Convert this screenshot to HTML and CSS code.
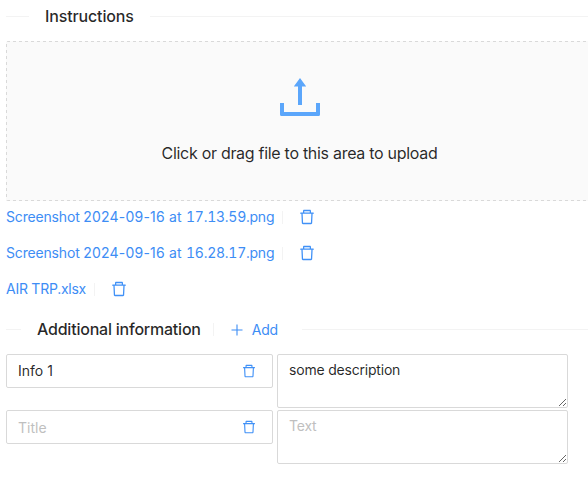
FILE: index.html
```html
<!DOCTYPE html>
<html lang="en">
<head>
<meta charset="utf-8">
<title>Instructions</title>
<link rel="stylesheet" href="styles.css">
</head>
<body>
<svg class="sprite" aria-hidden="true">
  <symbol id="trash" viewBox="64 64 896 896"><path d="M360 184h-8c4.400 0 8-3.600 8-8v8h304v-8c0 4.400 3.600 8 8 8h-8v72h72v-80c0-35.300-28.700-64-64-64H352c-35.300 0-64 28.700-64 64v80h72v-72zm504 72H160c-17.700 0-32 14.300-32 32v32c0 4.400 3.600 8 8 8h60.400l24.700 523c1.600 34.100 29.800 61 63.900 61h454c34.200 0 62.300-26.800 63.900-61l24.700-523H888c4.400 0 8-3.600 8-8v-32c0-17.700-14.300-32-32-32zM731.300 840H292.700l-24.200-512h487l-24.200 512z"/></symbol>
</svg>
<main class="form">
  <div class="divider instructions"><h2>Instructions</h2></div>
  <section class="dropzone">
    <svg class="upload" viewBox="0 0 40 38"><path d="M20 0 26.200 8.500H22V27H18V8.500H13.800ZM0 25H4V34H36V25H40V36.500Q40 38 38.500 38H1.500Q0 38 0 36.500Z"/></svg>
    <p>Click or drag file to this area to upload</p>
  </section>
  <ul class="files">
    <li><a><span class="name">Screenshot </span><span class="date">2024-09-16 at </span><span class="time">17.13.59.png</span></a><i class="bar"></i><svg class="trash"><use href="#trash"/></svg></li>
    <li><a><span class="name">Screenshot </span><span class="date">2024-09-16 at </span><span class="time">16.28.17.png</span></a><i class="bar"></i><svg class="trash"><use href="#trash"/></svg></li>
    <li><a class="short">AIR TRP.xlsx</a><i class="bar"></i><svg class="trash"><use href="#trash"/></svg></li>
  </ul>
  <div class="divider additional"><h2>Additional information</h2><i class="bar"></i>
    <button class="add" type="button"><svg viewBox="0 0 12 12"><path d="M5.450 0.500h1.100v11h-1.100zM0.500 5.450h11v1.100h-11z"/></svg><span>Add</span></button></div>
  <div class="row">
    <label class="field"><input value="Info 1"><svg class="trash"><use href="#trash"/></svg></label>
    <textarea>some description</textarea>
  </div>
  <div class="row">
    <label class="field"><input class="empty" placeholder="Title"><svg class="trash"><use href="#trash"/></svg></label>
    <textarea placeholder="Text"></textarea>
  </div>
</main>
</body>
</html>
```
FILE: styles.css
```css
* { box-sizing: border-box; }
body {
  margin: 0;
  overflow: hidden;
  background: #fff;
  color: rgba(0, 0, 0, .85);
  font: 14px/22px Inter, "Liberation Sans", sans-serif;
}
.sprite { display: none; }
.form { width: 593px; padding: 4px 0 0 6px; }
.divider { display: flex; align-items: center; height: 24px; }
.divider::before, .divider::after { content: ""; height: 1px; background: #f3f3f3; }
.divider::after { flex: 1; }
h2 { margin: 0; font-size: 16px; line-height: 24px; font-weight: 500; white-space: nowrap; }
.instructions::before { width: 23px; }
.instructions h2 { margin: 0 16px; letter-spacing: -.14px; }
.additional::before { width: 15px; }
.additional h2 { margin-left: 16px; letter-spacing: -.22px; }
.bar { width: 1px; height: 13px; background: #f3f3f3; }
.dropzone {
  display: flex; flex-direction: column; align-items: center;
  height: 160px; margin-top: 13px; padding-top: 37px; border-radius: 2px;
  background:
    repeating-linear-gradient(90deg, #d9d9d9 0 3px, transparent 3px 6px) 1px 0 / 100% 1px no-repeat,
    repeating-linear-gradient(90deg, #d9d9d9 0 3px, transparent 3px 6px) 1px 100% / 100% 1px no-repeat,
    repeating-linear-gradient(#d9d9d9 0 3px, transparent 3px 6px) 0 3px / 1px 100% no-repeat,
    #fafafa;
}
.upload { width: 40px; height: 38px; margin-left: 1px; fill: #5ba6fb; }
.dropzone p { margin: 25px 0 0; font-size: 16px; line-height: 24px; white-space: nowrap; letter-spacing: -.29px; }
.files { list-style: none; margin: 0; padding: 0; }
.files li { display: flex; align-items: center; height: 32px; margin-bottom: 4px; color: #3d8df5; }
.files a { white-space: pre; }
.files .bar { margin: 0 16px 0 8px; }
.name { letter-spacing: -.17px; }
.date { letter-spacing: .2px; }
.time { letter-spacing: -.24px; font-variant-numeric: tabular-nums; }
.short { letter-spacing: -.25px; }
.trash { width: 16px; height: 16px; fill: #4091f7; }
.additional { margin: 12px 0 13px; }
.add {
  display: flex; align-items: center; gap: 9px; padding: 2px 0 0; border: 0;
  background: none; color: #3d8df5; font: inherit; margin: 0 24px 0 17px; letter-spacing: -.2px;
}
.add svg { width: 12px; height: 12px; fill: currentColor; }
.additional .bar { margin-left: 12px; }
.row { display: flex; align-items: flex-start; gap: 4px; height: 54px; margin-bottom: 2px; }
.field {
  display: flex; align-items: center; width: 267px; height: 34px;
  padding: 0 16px 0 11px; border: 1px solid #d9d9d9; border-radius: 2px;
}
.field .trash { width: 14px; height: 14px; }
input, textarea { font: inherit; color: inherit; outline: 0; background: none; }
input { flex: 1; min-width: 0; padding: 0; border: 0; }
.empty { padding-top: 2px; }
textarea { display: block; width: 291px; height: 54px; padding: 4px 11px; border: 1px solid #d9d9d9; border-radius: 2px; resize: vertical; letter-spacing: -.2px; }
::placeholder { color: #bfbfbf; opacity: 1; }
```
